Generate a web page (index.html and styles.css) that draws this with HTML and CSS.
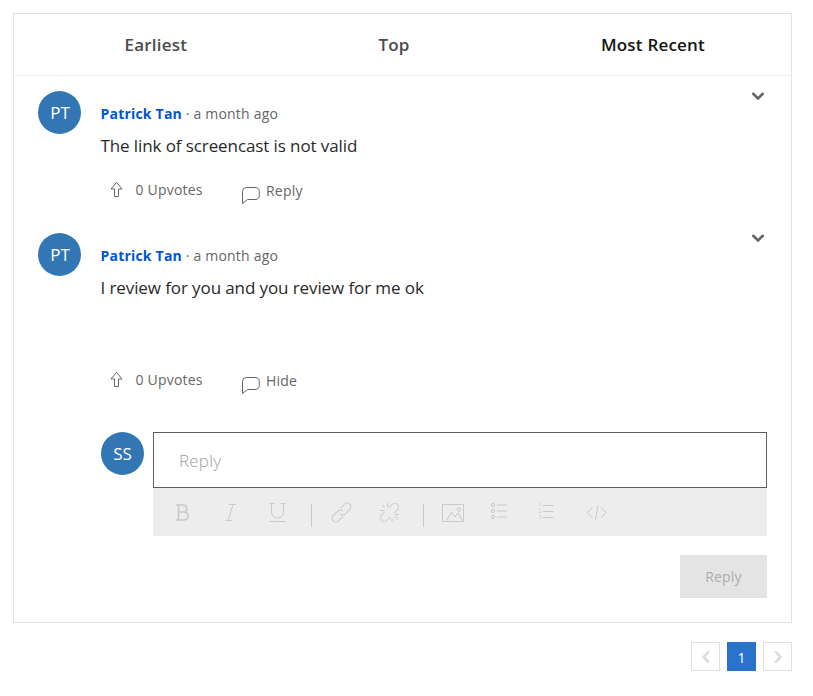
FILE: index.html
```html
<!DOCTYPE html>
<html lang="en">
<head>
<meta charset="utf-8">
<title>Comments</title>
<link rel="stylesheet" href="styles.css">
</head>
<body>
<svg class="defs" aria-hidden="true">
  <symbol id="chevron" viewBox="0 0 14 10"><path d="M2.200 2.800 7 7.400l4.800-4.600" fill="none" stroke="currentColor" stroke-width="2.600" stroke-linecap="round"/></symbol>
  <symbol id="upvote" viewBox="0 0 13 16"><path d="M6.500 1.300 12 8H8.500V15.500H4.500V8H1z" fill="none" stroke="currentColor"/></symbol>
  <symbol id="bubble" viewBox="0 0 18 18"><path d="M.5 16.500V4.500Q.5.500 4.500.5H13Q17.300.5 17.300 4.500V8.500Q17.300 12.500 13 12.500H5.500z" fill="none" stroke="currentColor"/></symbol>
</svg>
<main class="card">
  <nav class="tabs">
    <a class="tab">Earliest</a>
    <a class="tab">Top</a>
    <a class="tab tab-active">Most Recent</a>
  </nav>
  <article class="comment">
    <div class="avatar">PT</div>
    <div class="content">
      <div class="meta"><b class="author">Patrick Tan</b> · a month ago</div>
      <p class="text">The link of screencast is not valid</p>
      <div class="actions">
        <span class="votes"><svg class="icon-up"><use href="#upvote"/></svg>0 Upvotes</span>
        <span class="toggle"><svg class="icon-bubble"><use href="#bubble"/></svg>Reply</span>
      </div>
    </div>
    <svg class="chevron"><use href="#chevron"/></svg>
  </article>
  <article class="comment comment-open">
    <div class="avatar">PT</div>
    <div class="content">
      <div class="meta"><b class="author">Patrick Tan</b> · a month ago</div>
      <p class="text text-tall">I review for you and you review for me ok</p>
      <div class="actions">
        <span class="votes"><svg class="icon-up"><use href="#upvote"/></svg>0 Upvotes</span>
        <span class="toggle"><svg class="icon-bubble"><use href="#bubble"/></svg>Hide</span>
      </div>
    </div>
    <svg class="chevron"><use href="#chevron"/></svg>
  </article>
  <section class="reply">
    <div class="avatar">SS</div>
    <div class="editor">
      <div class="field">Reply</div>
      <svg class="toolbar" viewBox="0 0 614 48">
        <g class="strokes">
          <path d="M23 17h7c5 0 5 7 0 7h-5h5.500c6 0 6 8 0 8H23M25.500 17V32" stroke-width="1.600"/>
          <path d="M76 16.500h7M72 32.500h7M80 16.500 75 32.500"/>
          <path d="M116.500 15.500h5M127.500 15.500h5M118.500 15.500v8q0 6.500 6 6.500t6-6.500v-8M116.500 33.500h16"/>
          <path d="M158.500 16v23M270.500 16v23"/>
          <g transform="translate(188.500 24.500) rotate(-45)"><path d="M-2.500 3.800H-8a3.700 3.700 0 0 1 0-7.500h6q4 0 4 4M2.500-3.800H8a3.700 3.700 0 0 1 0 7.500h-6q-4 0-4-4"/></g>
          <g transform="translate(236.500 24.500) rotate(-45)"><path d="M-3 3.800H-7.500a3.700 3.700 0 0 1 0-7.500h4M3-3.800H7.500a3.700 3.700 0 0 1 0 7.500H3"/></g>
          <path d="M234.500 15v4M229.500 17l2 3M227.500 22.500h4M239 30v4M242 28l3 4M242 26.500h4"/>
          <path d="M289.500 16.500h21v17h-21zM293.500 32.500 298.500 24l3.500 5 3-4 4 7.500"/><circle cx="306" cy="21.500" r="1.800"/>
          <circle cx="340" cy="17" r="1.600"/><circle cx="340" cy="23" r="1.600"/><circle cx="340" cy="29" r="1.600"/>
          <path d="M344 17h10M344 23h10M344 29h10" class="pale"/>
          <path d="M390 17.500h10.500M390 23.500h10.500M390 29.500h10.500"/>
          <path d="M439.500 19 434.500 24.500l5 5.500M448 19l5 5.500-5 5.500M445 17.500l-2.500 14"/>
        </g>
        <g class="digits"><text x="385.500" y="19">1</text><text x="385.500" y="25">2</text><text x="385.500" y="31">3</text></g>
      </svg>
      <button class="submit" disabled>Reply</button>
    </div>
  </section>
</main>
<nav class="pages">
  <a class="page"><svg class="arrow arrow-left"><use href="#chevron"/></svg></a>
  <a class="page page-current">1</a>
  <a class="page"><svg class="arrow arrow-right"><use href="#chevron"/></svg></a>
</nav>
</body>
</html>
```
FILE: styles.css
```css
* { box-sizing: border-box; }
body { margin: 0; padding: 13px 21px 0 13px; background: #fff; color: #666; font: 14px/20px "Open Sans", sans-serif; letter-spacing: .2px; }
.defs { position: absolute; width: 0; height: 0; }
.card { width: 779px; height: 610px; border: 1px solid #e2e2e2; }
.tabs { display: flex; justify-content: space-between; align-items: center; height: 62px; padding: 0 86px 0 110.500px; border-bottom: 1px solid #ededed; font-size: 17px; font-weight: 600; letter-spacing: .2px; }
.tab { color: #4c4c4c; }
.tab-active { color: #141414; }
.comment { display: flex; height: 142px; padding: 15px 24px 0; }
.comment-open { height: 214px; }
.avatar { flex: none; width: 43px; height: 43px; border-radius: 50%; background: #3277b3; color: #fff; font-size: 17px; line-height: 43px; letter-spacing: 0; text-align: center; padding-left: 1px; }
.reply .avatar { padding-left: 0; }
.content { flex: 1; padding: 13px 0 0 19.500px; }
.author { color: #0056d2; font-weight: 700; }
.text { margin: 10px 0 0; height: 45px; font-size: 17px; line-height: 24px; color: #292929; letter-spacing: -.1px; }
.text-tall { height: 93px; }
.actions { display: flex; padding: 1px 0 0 9.500px; }
.votes { display: flex; width: 131px; }
.icon-up { width: 13px; height: 16px; margin: 1px 12.500px 0 0; }
.toggle { display: flex; padding-top: 1px; }
.icon-bubble { width: 18px; height: 18px; margin: 5.500px 6px 0 1px; }
.chevron { width: 14px; height: 10px; margin: 0 2px; }
.reply { display: flex; gap: 9px; padding: 0 24px 0 87px; }
.editor { width: 614px; display: flex; flex-direction: column; }
.field { height: 56px; border: 1px solid #5e5e5e; padding: 16px 25px; font-size: 17px; line-height: 24px; font-weight: 300; color: #a0a0a0; }
.toolbar { width: 614px; height: 48px; background: #ededed; }
.strokes { fill: none; stroke: #c9c9c9; stroke-width: 1; }
.pale { stroke-width: 1.5; stroke: #d5d5d5; }
.digits { fill: #c9c9c9; font: 5px "Open Sans", sans-serif; }
.submit { align-self: flex-end; width: 87px; height: 43px; margin-top: 19px; padding: 0; border: 0; background: #e4e4e4; color: #ababab; font: 14px/43px "Open Sans", sans-serif; letter-spacing: .2px; }
.pages { display: flex; justify-content: flex-end; gap: 7px; margin-top: 19px; }
.page { display: flex; align-items: center; justify-content: center; width: 29px; height: 29px; border: 1px solid #e0e0e0; color: #dcdcdc; }
.page-current { border-color: #2a73cc; background: #2a73cc; color: #fff; padding-top: 3px; }
.arrow { width: 14px; height: 10px; }
.arrow-left { transform: rotate(90deg); }
.arrow-right { transform: rotate(-90deg); }
```
